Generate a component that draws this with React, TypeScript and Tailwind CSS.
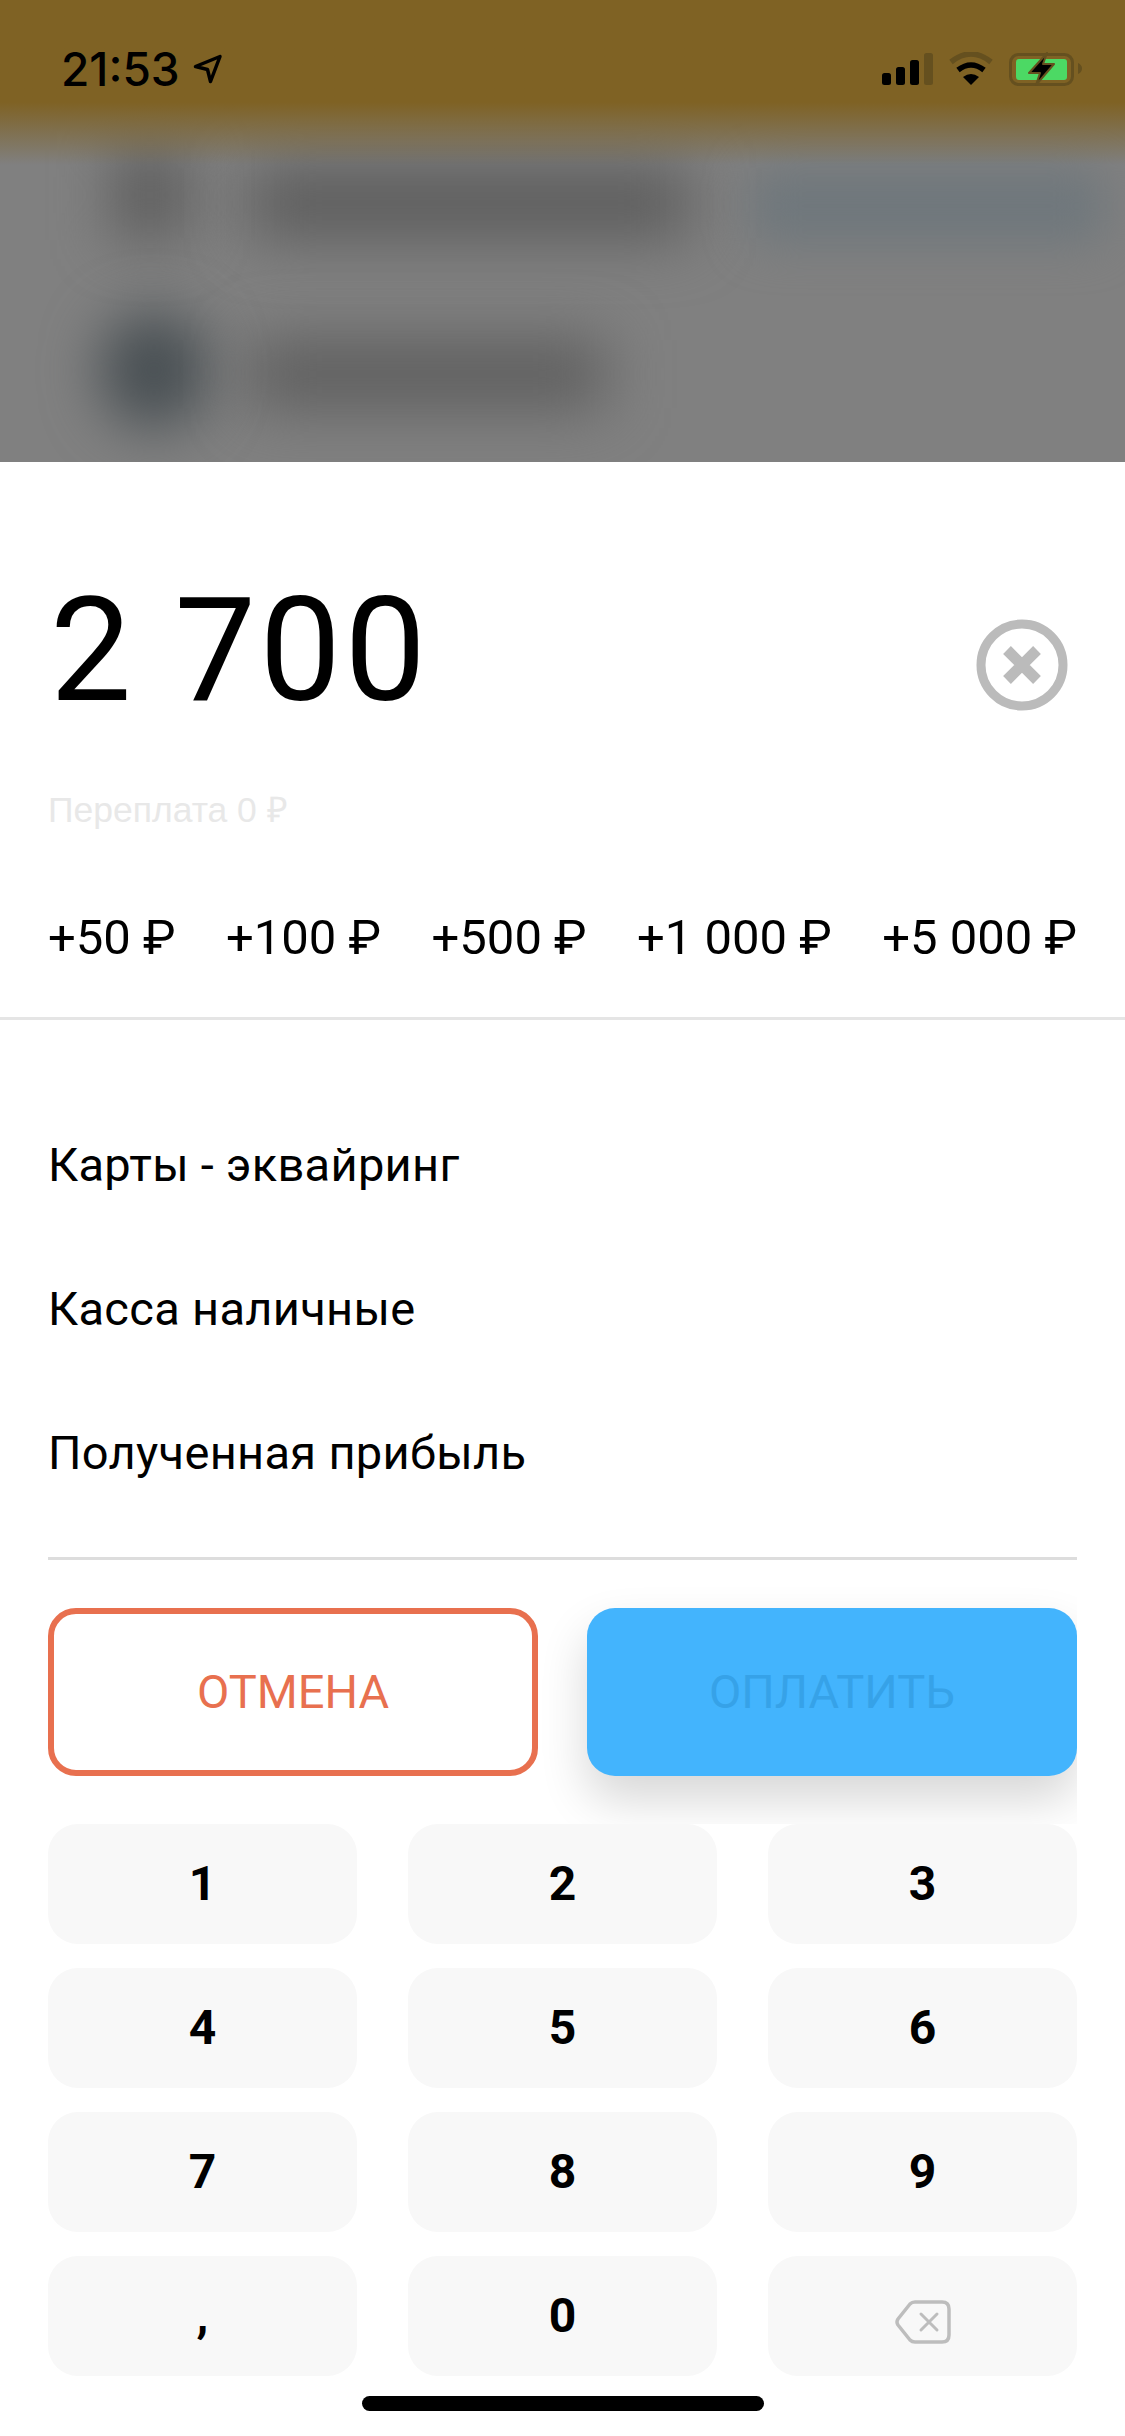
import React from 'react';

const chips = ['+50 ₽', '+100 ₽', '+500 ₽', '+1 000 ₽', '+5 000 ₽'];
const accounts = ['Карты - эквайринг', 'Касса наличные', 'Полученная прибыль'];
const keys = ['1', '2', '3', '4', '5', '6', '7', '8', '9', ',', '0'];

const StatusIcons = () => (
  <svg width="202" height="34" viewBox="880 52 202 34" fill="none">
    {/* signal */}
    <rect x="882" y="73" width="9" height="12" rx="2.5" fill="#000" />
    <rect x="896" y="67" width="9" height="18" rx="2.5" fill="#000" />
    <rect x="910" y="60" width="9" height="25" rx="2.5" fill="#000" />
    <rect x="924" y="53" width="9" height="32" rx="2.5" fill="#65501f" />
    {/* wifi */}
    <path d="M951 62 Q971 46 991 62" stroke="#65501f" strokeWidth="5.5" />
    <path d="M958 70 Q971 60 984 70" stroke="#000" strokeWidth="5.5" />
    <path d="M963 77 Q971 71 979 77 L971 85 Z" fill="#000" />
    {/* battery */}
    <rect x="1010.5" y="54.5" width="62" height="30" rx="8" stroke="#65501f" strokeWidth="3" />
    <rect x="1016" y="59" width="51" height="21" rx="3" fill="#4cd964" />
    <path d="M1078 63 Q1082 65 1082 68.5 Q1082 72 1078 74 Z" fill="#65501f" />
    {/* bolt */}
    <path
      d="M1047 53 L1029 73 L1040 73 L1036 85 L1054 64 L1043 64 Z"
      fill="#000"
      stroke="#65501f"
      strokeWidth="2"
      strokeLinejoin="round"
    />
  </svg>
);

const BlurredBackdrop = () => (
  <>
    <div className="absolute left-[112px] top-[150px] w-[76px] h-[90px] bg-[#5f5f5f] blur-[28px]" />
    <div className="absolute left-[250px] top-[168px] w-[440px] h-[70px] bg-[#5c5c5c] blur-[30px]" />
    <div className="absolute left-[750px] top-[168px] w-[355px] h-[76px] rounded-[20px] bg-[#6f777c] blur-[22px]" />
    <div className="absolute left-[100px] top-[312px] w-[108px] h-[116px] rounded-full bg-[#484f53] blur-[28px]" />
    <div className="absolute left-[250px] top-[340px] w-[355px] h-[68px] bg-[#5e5e5e] blur-[30px]" />
    <div className="absolute inset-x-0 top-0 h-[165px] bg-gradient-to-b from-[#7f6224] from-[62%] to-[#7f622400]" />
  </>
);

const BackspaceIcon = () => (
  <svg width="56" height="44" viewBox="0 0 56 44" fill="none" stroke="#bdbdbd" strokeLinejoin="round" strokeLinecap="round" className="mt-[12px]">
    <path
      d="M20 2 H47 Q54 2 54 9 V35 Q54 42 47 42 H20 Q17 42 15 40 L3 25 Q1 22 3 19 L15 4 Q17 2 20 2 Z"
      strokeWidth="3.5"
    />
    <path d="M26 14 L42 30 M42 14 L26 30" strokeWidth="3" />
  </svg>
);

export default function App() {
  return (
    <div className="w-[1125px] h-[2436px] flex flex-col bg-white font-['Roboto',sans-serif] text-black overflow-hidden">
      {/* Blurred page behind the sheet */}
      <div className="relative h-[462px] shrink-0 bg-[#808080] overflow-hidden">
        <BlurredBackdrop />
        <div className="relative flex items-start justify-between pl-[61px] pr-[43px] pt-[52px]">
          <div className="flex items-center gap-[13px]">
            <span className="text-[46px] leading-[34px] font-medium font-['Inter',sans-serif]">21:53</span>
            <svg width="30" height="30" viewBox="0 0 30 30" fill="none">
              <path d="M27 2.5 L2.5 12.5 L14.5 15.5 L17.5 27.5 Z" stroke="#000" strokeWidth="3.5" strokeLinejoin="round" />
            </svg>
          </div>
          <StatusIcons />
        </div>
      </div>

      {/* Amount */}
      <div className="flex items-center justify-between pl-[50px] pr-[57px] pt-[103px]">
        <span className="text-[145px] leading-[170px] font-normal tracking-[3.5px]">2 700</span>
        <svg width="92" height="92" viewBox="0 0 92 92" fill="none" stroke="#bbbbbb" className="mt-[30px]">
          <circle cx="46" cy="46" r="41" strokeWidth="9" />
          <path d="M31 31 L61 61 M61 31 L31 61" strokeWidth="11" />
        </svg>
      </div>
      <div className="pl-[48px] mt-[55px] text-[35.5px] leading-[40px] text-[#e8e8e8] font-['Liberation_Sans',sans-serif]">
        Переплата 0 ₽
      </div>

      {/* Quick add */}
      <div className="flex justify-between px-[48px] mt-[80px] text-[49px] leading-[56px]">
        {chips.map((c) => (
          <span key={c}>{c}</span>
        ))}
      </div>
      <div className="h-[3px] bg-[#e5e5e5] mt-[51px] shrink-0" />

      {/* Accounts */}
      <div className="flex flex-col gap-[92px] px-[48px] pt-[119px] text-[47px] leading-[52px] tracking-[0.3px]">
        {accounts.map((a) => (
          <div key={a}>{a}</div>
        ))}
      </div>

      <div className="h-[3px] bg-[#dddddd] mx-[48px] mt-[78px] shrink-0" />

      {/* Actions */}
      <div className="mx-[48px] overflow-hidden pt-[48px] pb-[48px] grid grid-cols-2 gap-[49px] text-[47px]">
        <button className="h-[168px] rounded-[28px] border-[6px] border-[#e8704f] text-[#e8704f]">ОТМЕНА</button>
        <button className="h-[168px] rounded-[28px] bg-[#43b4fd] text-[#36a2e8] shadow-[0_24px_48px_rgba(0,0,0,0.16)]">ОПЛАТИТЬ</button>
      </div>

      {/* Keypad */}
      <div className="grid grid-cols-3 gap-x-[51px] gap-y-[24px] px-[48px]">
        {keys.map((k) => (
          <button key={k} className="h-[120px] rounded-[30px] bg-[#f8f8f8] text-[48px] font-bold">
            {k}
          </button>
        ))}
        <button className="h-[120px] rounded-[30px] bg-[#f8f8f8] flex items-center justify-center">
          <BackspaceIcon />
        </button>
      </div>

      <div className="w-[402px] h-[15px] rounded-full bg-black mx-auto mt-[20px] shrink-0" />
    </div>
  );
}
